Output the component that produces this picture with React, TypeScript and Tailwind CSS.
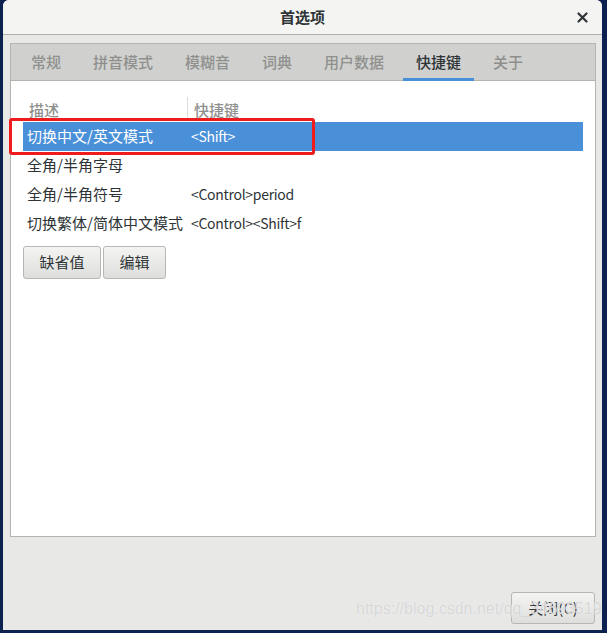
import React from "react";

const tabs = ["常规", "拼音模式", "模糊音", "词典", "用户数据", "快捷键", "关于"];
const rows: [string, string][] = [
  ["切换中文/英文模式", "<Shift>"],
  ["全角/半角字母", ""],
  ["全角/半角符号", "<Control>period"],
  ["切换繁体/简体中文模式", "<Control><Shift>f"],
];

export default function App() {
  return (
    <div
      className="relative w-[607px] h-[633px] overflow-hidden bg-[#0d2150] pl-[3px] pr-[5px] pb-[3px]"
      style={{ fontFamily: '"Noto Sans CJK SC", "Noto Sans", sans-serif' }}
    >
      <div className="flex flex-col h-full bg-[#e8e8e7] rounded-t-[6px] overflow-hidden">
        {/* title bar */}
        <div className="relative h-[35px] shrink-0 bg-[#f4f4f3] border-b border-[#aeaeab] flex items-center justify-center">
          <span className="text-[15px] font-bold text-[#2e3436] leading-none mt-[-2px]">首选项</span>
          <svg className="absolute right-[14px] top-[12px]" width="11" height="11" viewBox="0 0 11 11">
            <path d="M1.5 1.5 L9.5 9.5 M9.5 1.5 L1.5 9.5" stroke="#2e3436" strokeWidth="2.2" strokeLinecap="round" />
          </svg>
        </div>

        {/* body */}
        <div className="flex-1 flex flex-col pt-[8px] pl-[7px] pr-[6px] pb-[6px]">
          <div className="h-[494px] flex flex-col border border-[#b4b4b1]">
            <div className="h-[37px] shrink-0 bg-[#d0d0cf] border-b border-[#b4b4b1] flex items-stretch pl-[4px]">
              {tabs.map((t) => {
                const active = t === "快捷键";
                return (
                  <div
                    key={t}
                    className={
                      "mx-[3px] px-[13px] flex items-center text-[15px] font-medium border-b-[3px] mb-[-1px] " +
                      (active ? "text-[#2e3436] border-[#4a90d9]" : "text-[#8f908d] border-transparent")
                    }
                  >
                    <span className="pt-[3px]">{t}</span>
                  </div>
                );
              })}
            </div>

            <div className="flex-1 bg-white px-[12px] pt-[16px]">
              {/* header */}
              <div className="flex h-[25px] items-start text-[15px] text-[#8f908d] font-medium">
                <div className="w-[164px] pl-[6px] pt-[2px] leading-[21px]">描述</div>
                <div className="border-l border-[#dcdcdb] h-[21px] pl-[6px] pt-[2px] leading-[21px]">快捷键</div>
              </div>
              {rows.map(([a, b], i) => (
                <div
                  key={a}
                  className={
                    "flex h-[29px] items-center text-[15px] " +
                    (i === 0 ? "bg-[#4a90d9] text-white" : "text-[#2e3436]")
                  }
                >
                  <div className="w-[164px] pl-[4px] whitespace-nowrap">{a}</div>
                  <div className="pl-[4px] whitespace-nowrap text-[14px] tracking-[-0.3px]">{b}</div>
                </div>
              ))}
              <div className="flex gap-[2px] mt-[8px]">
                <button className="w-[78px] h-[33px] rounded-[3px] border border-[#b6b6b3] bg-gradient-to-b from-[#f4f4f3] to-[#dededc] text-[15px] text-[#2e3436]">
                  缺省值
                </button>
                <button className="w-[63px] h-[33px] rounded-[3px] border border-[#b6b6b3] bg-gradient-to-b from-[#f4f4f3] to-[#dededc] text-[15px] text-[#2e3436]">
                  编辑
                </button>
              </div>
            </div>
          </div>

          <div className="flex-1 flex items-end justify-end">
            <button className="w-[84px] h-[32px] mr-[1px] rounded-[3px] border border-[#b6b6b3] bg-gradient-to-b from-[#f4f4f3] to-[#dededc] text-[15px] text-[#2e3436]">
              关闭(C)
            </button>
          </div>
        </div>
      </div>

      {/* red highlight annotation */}
      <div className="absolute left-[9px] top-[118px] w-[306px] h-[37px] border-[3px] border-[#ee1c1c] rounded-[3px] pointer-events-none" />

      {/* watermark */}
      <div
        className="absolute left-[356px] top-[597px] text-[16px] text-[#d6d6d6] whitespace-nowrap pointer-events-none"
        style={{ fontFamily: '"Liberation Sans", Arial, sans-serif', textShadow: "0 0 1px #ffffff" }}
      >
        https://blog.csdn.net/qq_34693519
      </div>
    </div>
  );
}
